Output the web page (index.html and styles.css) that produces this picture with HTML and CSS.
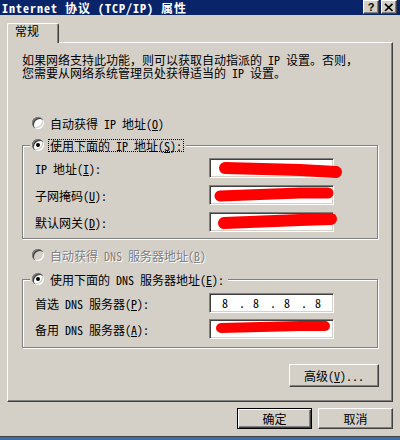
FILE: index.html
```html
<!DOCTYPE html>
<html lang="zh-CN">
<head>
<meta charset="utf-8">
<title>Internet 协议 (TCP/IP) 属性</title>
<link rel="stylesheet" href="styles.css">
</head>
<body>
<div class="dialog">
  <div class="titlebar">
    <span class="title">Internet 协议 (TCP/IP) 属性</span>
    <div class="caption-btns">
      <span class="cbtn help">?</span>
      <span class="cbtn close"><svg width="10" height="9" viewBox="0 0 10 9"><path d="M1 0.8 L8.5 8 M8.5 0.8 L1 8" stroke="#000" stroke-width="1.7" fill="none"/></svg></span>
    </div>
  </div>
  <div class="tabs"><div class="tab">常规</div></div>
  <div class="panel">
    <p class="desc">如果网络支持此功能，则可以获取自动指派的 IP 设置。否则，<br>您需要从网络系统管理员处获得适当的 IP 设置。</p>
    <div class="opt opt-ip-auto"><span class="radio"></span><span class="lbl">自动获得 IP 地址(<u>O</u>)</span></div>
    <fieldset class="group group-ip">
      <legend><span class="legend-inner"><span class="radio checked"></span><span class="lbl focus">使用下面的 IP 地址(<u>S</u>):</span></span></legend>
      <div class="fields fields-ip">
        <span>IP 地址(<u>I</u>):</span><span class="input"></span>
        <span>子网掩码(<u>U</u>):</span><span class="input"></span>
        <span>默认网关(<u>D</u>):</span><span class="input"></span>
      </div>
    </fieldset>
    <div class="opt opt-dns-auto dis"><span class="radio off"></span><span class="lbl">自动获得 DNS 服务器地址(<u>B</u>)</span></div>
    <fieldset class="group group-dns">
      <legend><span class="legend-inner"><span class="radio checked"></span><span class="lbl">使用下面的 DNS 服务器地址(<u>E</u>):</span></span></legend>
      <div class="fields fields-dns">
        <span>首选 DNS 服务器(<u>P</u>):</span>
        <span class="input ip"><span class="oct">8</span><span class="dot">.</span><span class="oct">8</span><span class="dot">.</span><span class="oct">8</span><span class="dot">.</span><span class="oct">8</span></span>
        <span>备用 DNS 服务器(<u>A</u>):</span><span class="input"></span>
      </div>
    </fieldset>
    <div class="adv"><button class="btn btn-adv">高级(<u>V</u>)...</button></div>
  </div>
  <div class="footer">
    <button class="btn btn-default">确定</button>
    <button class="btn">取消</button>
  </div>
  <div class="taskbar"></div>
</div>
<svg class="redact" width="400" height="440" viewBox="0 0 400 440">
  <g stroke="#ff0000" stroke-linecap="round" stroke-linejoin="round" fill="none">
    <path d="M225 168 L300 170 L336 172" stroke-width="12"/>
    <path d="M220 196 L300 193 L328 193" stroke-width="11"/>
    <path d="M224 223 L300 220 L331 219" stroke-width="12"/>
    <path d="M221 328 L300 326 L325 326" stroke-width="10"/>
  </g>
</svg>
</body>
</html>
```
FILE: styles.css
```css
* { box-sizing: border-box; }
html, body { margin: 0; padding: 0; }
body {
  width: 400px;
  height: 440px;
  overflow: hidden;
  position: relative;
  background: #d4d0c8;
  color: #000;
  font-family: "Noto Sans Mono CJK SC", "Noto Sans CJK SC", "Liberation Mono", monospace;
  font-size: 12px;
}
.dialog { display: flex; flex-direction: column; height: 440px; }

.titlebar {
  height: 15px;
  flex: none;
  background: #0a246a;
  display: flex;
  justify-content: space-between;
  align-items: flex-start;
  padding: 0 3px 0 2px;
}
.title {
  color: #fff;
  font-weight: bold;
  line-height: 15px;
  letter-spacing: 1px;
  white-space: nowrap;
}
.caption-btns { display: flex; gap: 2px; }
.cbtn {
  width: 16px;
  height: 14px;
  background: #d4d0c8;
  border: 1px solid;
  border-color: #fff #404040 #404040 #fff;
  box-shadow: inset -1px -1px #808080;
  display: flex;
  align-items: center;
  justify-content: center;
}
.cbtn.help { font: bold 11px "Liberation Sans", sans-serif; line-height: 12px; }

.tabs {
  height: 27px;
  flex: none;
  display: flex;
  align-items: flex-end;
  padding-left: 7px;
}
.tab {
  position: relative;
  z-index: 1;
  width: 52px;
  height: 20px;
  margin-bottom: -1px;
  background: #d4d0c8;
  border-top: 1px solid #fff;
  border-left: 1px solid #fff;
  border-right: 1px solid #404040;
  border-radius: 2px 2px 0 0;
  box-shadow: inset -1px 0 #808080;
  padding-left: 7px;
  line-height: 14px;
}

.panel {
  flex: none;
  margin-left: 7px;
  width: 386px;
  height: 360px;
  border: 1px solid;
  border-color: #fff #404040 #404040 #fff;
  box-shadow: inset -1px -1px #808080;
  padding: 10px 14px 0 14px;
}
.desc { margin: 0; line-height: 13px; white-space: nowrap; }

.opt, .legend-inner {
  display: flex;
  align-items: center;
  gap: 4px;
  height: 14px;
}
.opt { margin-left: 10px; }
.opt-ip-auto { margin-top: 37px; }
.opt-dns-auto { margin-top: 9px; }
.lbl {
  border: 1px dotted transparent;
  padding: 0 1px;
  line-height: 11px;
  white-space: nowrap;
}
.lbl.focus { border-color: #000; }
.dis .lbl { color: #808080; text-shadow: 1px 1px #fff; }

.radio {
  position: relative;
  flex: none;
  width: 12px;
  height: 12px;
  border-radius: 50%;
  background: #fff;
  box-shadow: inset 1px 1px #808080, inset 2px 2px #404040, inset -1px -1px #fff, inset -2px -2px #d4d0c8;
}
.radio.off { background: #d4d0c8; }
.radio.checked::after {
  content: "";
  position: absolute;
  left: 4px;
  top: 4px;
  width: 4px;
  height: 4px;
  border-radius: 50%;
  background: #000;
}

.group {
  margin: 8px 0 0 0;
  padding: 0;
  min-width: 0;
  width: 356px;
  border: 1px solid #808080;
  box-shadow: inset 1px 1px #fff, 1px 1px #fff;
}
.group-dns { margin-top: 10px; }
.group legend {
  margin-left: 7px;
  padding: 0 2px;
  height: 14px;
  background: #d4d0c8;
}

.fields {
  display: grid;
  grid-template-columns: 174px 125px;
  align-items: center;
  padding-left: 12px;
  white-space: nowrap;
}
.fields-ip { row-gap: 7px; padding-top: 6px; padding-bottom: 6px; }
.fields-dns { row-gap: 6px; padding-top: 7px; padding-bottom: 8px; }
.input {
  height: 20px;
  background: #fff;
  border: 1px solid;
  border-color: #808080 #fff #fff #808080;
  box-shadow: inset 1px 1px #404040, inset -1px -1px #d4d0c8;
}
.input.ip { display: flex; align-items: center; padding-left: 5px; line-height: 14px; }
.oct { width: 20px; text-align: center; }
.dot { width: 11px; text-align: right; padding-right: 1px; }

.adv { display: flex; justify-content: flex-end; margin-top: 16px; margin-right: -1px; }

.btn {
  font: inherit;
  color: #000;
  padding: 0;
  width: 75px;
  height: 21px;
  background: #d4d0c8;
  border: 1px solid;
  border-color: #fff #404040 #404040 #fff;
  box-shadow: inset -1px -1px #808080;
  line-height: 14px;
}
.btn-adv { width: 90px; height: 23px; }
.btn-default {
  border-color: #000;
  box-shadow: inset 1px 1px #fff, inset -1px -1px #404040, inset -2px -2px #808080;
}

.footer {
  flex: none;
  height: 34px;
  display: flex;
  justify-content: flex-end;
  align-items: flex-start;
  gap: 6px;
  padding: 6px 7px 0 0;
}
.taskbar {
  flex: none;
  height: 4px;
  border-top: 1px solid #404040;
  background: #3a6ea5;
}

.redact {
  position: absolute;
  left: 0;
  top: 0;
  pointer-events: none;
}
```
